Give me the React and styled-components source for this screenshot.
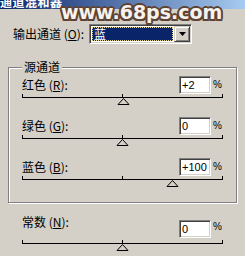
import React from "react";
import styled, { createGlobalStyle } from "styled-components";

const GlobalStyle = createGlobalStyle`
  html, body {
    margin: 0;
    padding: 0;
    background: #d4d0c8;
  }
  body {
    width: 245px;
    height: 256px;
    overflow: hidden;
    font-family: "Noto Sans CJK SC", "Liberation Sans", sans-serif;
    font-size: 12px;
    color: #000;
  }
`;

const Dialog = styled.div`
  position: relative;
  width: 245px;
  height: 256px;
  background: #d4d0c8;
  overflow: hidden;
`;

const TitleBar = styled.div`
  height: 9px;
  overflow: hidden;
  background: linear-gradient(90deg, #0a246a 0%, #a6caf0 100%);
`;

const Title = styled.div`
  margin-top: -5px;
  color: #fff;
  font-weight: bold;
  font-size: 12px;
  line-height: 14px;
  letter-spacing: 0.5px;
`;

const Watermark = styled.div`
  position: absolute;
  left: 61px;
  top: 3px;
  font-family: "DejaVu Sans", Verdana, sans-serif;
  font-weight: bold;
  font-size: 19px;
  line-height: 19px;
  white-space: nowrap;
  color: #f6f2ee;
  text-shadow:
    -1.5px -1.5px 0 #5e4233, 1.5px -1.5px 0 #5e4233,
    -1.5px 1.5px 0 #5e4233, 1.5px 1.5px 0 #5e4233,
    0 -2px 0 #5e4233, 0 2px 0 #5e4233,
    -2px 0 0 #5e4233, 2px 0 0 #5e4233;
  pointer-events: none;
`;

const OutputRow = styled.div`
  display: flex;
  align-items: center;
  margin-top: 15px;
  padding-left: 13px;
  height: 20px;
`;

const Label = styled.span`
  line-height: 14px;
  white-space: nowrap;
  width: ${(p) => p.$width || "auto"};
  flex: ${(p) => (p.$width ? "none" : "1")};
  margin-top: ${(p) => p.$lift || 0}px;
`;

const Select = styled.div`
  box-sizing: border-box;
  display: flex;
  width: 103px;
  height: 20px;
  padding: 1px;
  background: #fff;
  border: 1px solid;
  border-color: #808080 #fff #fff #808080;
  box-shadow: inset 1px 1px #404040, inset -1px -1px #d4d0c8;
`;

const SelectValue = styled.div`
  flex: 1;
  margin: 1px;
  background: #0a246a;
  outline: 1px dotted #e8d890;
  outline-offset: -1px;
  color: #fff;
  line-height: 14px;
  padding-left: 2px;
`;

const DropButton = styled.div`
  box-sizing: border-box;
  width: 16px;
  height: 16px;
  display: flex;
  align-items: center;
  justify-content: center;
  background: #d4d0c8;
  border: 1px solid;
  border-color: #d4d0c8 #404040 #404040 #d4d0c8;
  box-shadow: inset 1px 1px #fff, inset -1px -1px #808080;
`;

const GroupBox = styled.div`
  position: relative;
  box-sizing: border-box;
  width: 229px;
  margin: 23px 0 0 8px;
  padding: 8px 14px 3px 13px;
  border: 1px solid #808080;
  box-shadow: inset 1px 1px #fff, 1px 1px #fff;
`;

const Legend = styled.span`
  position: absolute;
  top: -8px;
  left: 13px;
  padding: 0 2px;
  background: #d4d0c8;
  line-height: 14px;
`;

const ChannelHeader = styled.div`
  display: flex;
  align-items: ${(p) => (p.$top ? "flex-start" : "center")};
  height: 18px;
`;

const NumberBox = styled.input`
  box-sizing: border-box;
  width: 32px;
  height: 18px;
  margin: 0;
  padding: 0 1px 0 2px;
  background: #fff;
  border: 1px solid;
  border-color: #808080 #fff #fff #808080;
  box-shadow: inset 1px 1px #404040, inset -1px -1px #d4d0c8;
  font-family: "Liberation Sans", Arial, sans-serif;
  font-size: 11px;
  color: #000;
  outline: none;
`;

const Percent = styled.span`
  width: 11px;
  text-align: right;
  font-family: "Liberation Sans", Arial, sans-serif;
  font-size: 10px;
  line-height: 14px;
`;

const Constant = styled.div`
  margin-top: 17px;
  padding-left: 22px;
  width: 200px;
`;

const SliderSvg = styled.svg`
  display: block;
  margin-top: ${(p) => p.$offset || 0}px;
`;

function Slider({ value, offset }) {
  const cx = ((value + 200) / 400) * 200 + 0.5;
  return (
    <SliderSvg width="201" height="23" $offset={offset}>
      <line x1="0" y1="3.5" x2="201" y2="3.5" stroke="#000" />
      <line x1="0.5" y1="0" x2="0.5" y2="4" stroke="#000" />
      <line x1="200.5" y1="0" x2="200.5" y2="4" stroke="#000" />
      <line x1="100.5" y1="0" x2="100.5" y2="4" stroke="#000" />
      <polygon
        points={`${cx},4.5 ${cx - 5.5},10.5 ${cx + 5.5},10.5`}
        fill="#d4d0c8"
        stroke="#000"
      />
    </SliderSvg>
  );
}

function Hotkey({ k }) {
  return (
    <>
      {" ("}
      <u>{k}</u>
      {"):"}
    </>
  );
}

function Channel({ name, hotkey, value }) {
  return (
    <div>
      <ChannelHeader>
        <Label>
          {name}
          <Hotkey k={hotkey} />
        </Label>
        <NumberBox readOnly value={value > 0 ? `+${value}` : `${value}`} />
        <Percent>%</Percent>
      </ChannelHeader>
      <Slider value={value} />
    </div>
  );
}

const channels = [
  { name: "红色", hotkey: "R", value: 2 },
  { name: "绿色", hotkey: "G", value: 0 },
  { name: "蓝色", hotkey: "B", value: 100 },
];

export default function App() {
  return (
    <Dialog>
      <GlobalStyle />
      <TitleBar>
        <Title>通道混和器</Title>
      </TitleBar>
      <OutputRow>
        <Label $width="76px">
          输出通道
          <Hotkey k="O" />
        </Label>
        <Select>
          <SelectValue>蓝</SelectValue>
          <DropButton>
            <svg width="7" height="4">
              <polygon points="0,0 7,0 3.5,4" fill="#000" />
            </svg>
          </DropButton>
        </Select>
      </OutputRow>
      <GroupBox>
        <Legend>源通道</Legend>
        {channels.map((c) => (
          <Channel key={c.hotkey} {...c} />
        ))}
      </GroupBox>
      <Constant>
        <ChannelHeader $top>
          <Label $lift={-5}>
            常数
            <Hotkey k="N" />
          </Label>
          <NumberBox readOnly value="0" />
          <Percent>%</Percent>
        </ChannelHeader>
        <Slider value={0} offset={2} />
      </Constant>
      <Watermark>www.68ps.com</Watermark>
    </Dialog>
  );
}
